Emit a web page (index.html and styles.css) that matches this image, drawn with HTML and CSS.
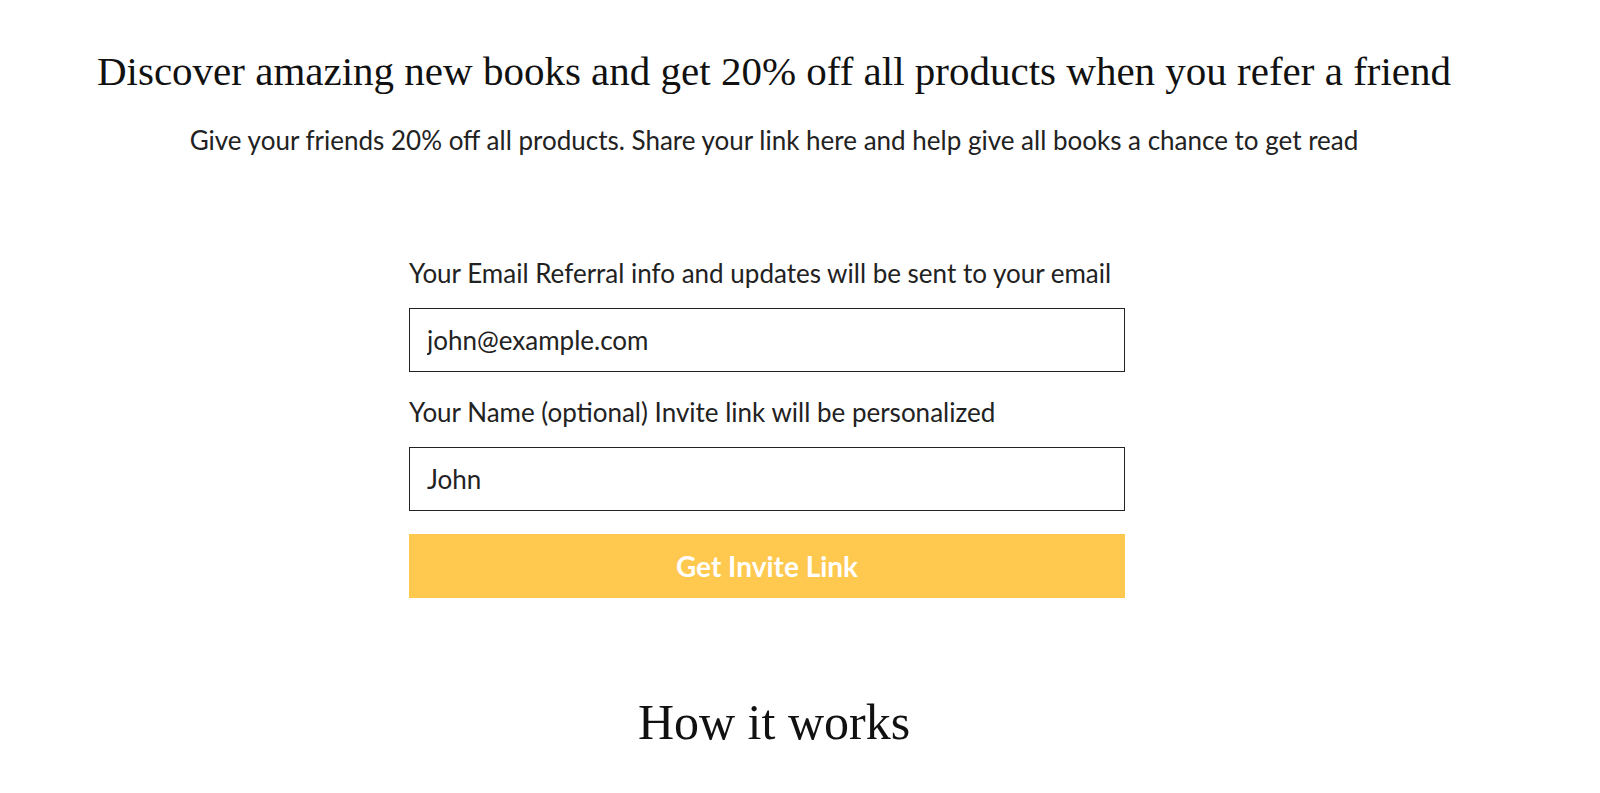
FILE: index.html
```html
<!DOCTYPE html>
<html lang="en">
<head>
    <meta charset="UTF-8">
    <meta name="viewport" content="width=device-width, initial-scale=1.0">
    <title>Refer a Friend</title>
    <link rel="stylesheet" href="styles.css">
</head>
<body>
    <div class="page">
        <h1 class="headline">Discover amazing new books and get 20% off all products when you refer a friend</h1>
        <p class="subline">Give your friends 20% off all products. Share your link here and help give all books a chance to get read</p>

        <form class="invite-form" onsubmit="return false;">
            <label for="email" class="field-label">Your Email Referral info and updates will be sent to your email</label>
            <input type="email" id="email" name="email" class="field-input" value="john@example.com">

            <label for="name" class="field-label">Your Name (optional) Invite link will be personalized</label>
            <input type="text" id="name" name="name" class="field-input" value="John">

            <button type="submit" class="invite-btn">Get Invite Link</button>
        </form>

        <h2 class="how-title">How it works</h2>
    </div>
</body>
</html>
```

FILE: styles.css
```css
body {
    margin: 0;
    background: #fff;
    color: #111;
}
.page {
    width: 1548px;
    padding-top: 47px;
}
.headline {
    font-family: "Liberation Serif", "Times New Roman", serif;
    font-weight: normal;
    font-size: 41px;
    line-height: 48px;
    text-align: center;
    margin: 0;
}
.subline {
    font-family: "Lato", "Open Sans", sans-serif;
    font-size: 26px;
    line-height: 32px;
    text-align: center;
    margin: 29px 0 0;
    color: #222;
}
.invite-form {
    width: 730px;
    margin: 101px auto 0;
    display: flex;
    flex-direction: column;
    align-items: flex-start;
}
.field-label {
    font-family: "Lato", "Open Sans", sans-serif;
    font-size: 26px;
    line-height: 32px;
    color: #222;
    margin-bottom: 19px;
}
.field-input {
    box-sizing: border-box;
    width: 716px;
    height: 64px;
    border: 1px solid #222;
    border-radius: 0;
    padding: 0 17px;
    font-family: "Lato", "Open Sans", sans-serif;
    font-size: 26px;
    color: #222;
    margin: 0 0 24px;
    outline: none;
}
.invite-btn {
    width: 716px;
    height: 64px;
    margin-top: -1px;
    border: none;
    background: #ffc84e;
    color: #fff;
    font-family: "Lato", "Open Sans", sans-serif;
    font-weight: bold;
    font-size: 28px;
    cursor: pointer;
}
.how-title {
    font-family: "Liberation Serif", "Times New Roman", serif;
    font-weight: normal;
    font-size: 50px;
    line-height: 60px;
    text-align: center;
    margin: 94px 0 0;
}
```
